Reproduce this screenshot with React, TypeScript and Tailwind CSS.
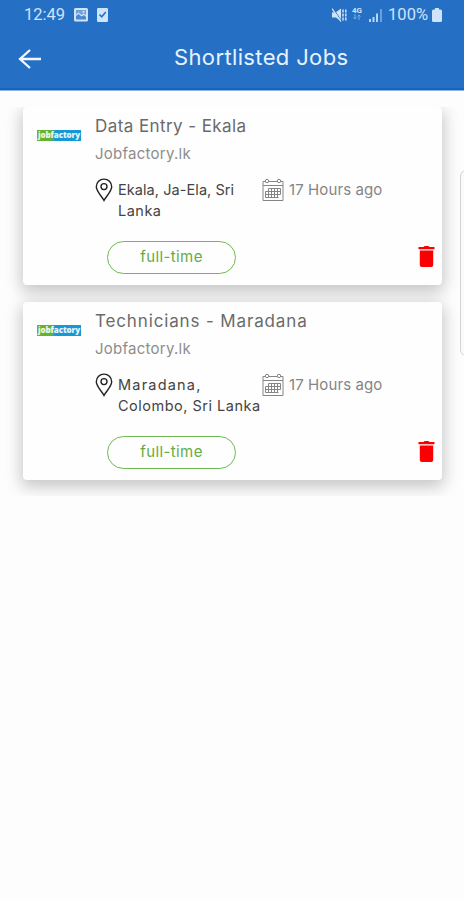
import React from 'react';

interface LocationLine {
  text: string;
  className: string;
}

interface Job {
  id: number;
  title: string;
  titleClass: string;
  company: string;
  location: LocationLine[];
  posted: string;
  type: string;
}

const jobs: Job[] = [
  {
    id: 1,
    title: 'Data Entry - Ekala',
    titleClass: 'tracking-[0.42px]',
    company: 'Jobfactory.lk',
    location: [
      { text: 'Ekala, Ja-Ela, Sri', className: 'tracking-[0.07px]' },
      { text: 'Lanka', className: 'tracking-[0.5px]' },
    ],
    posted: '17 Hours ago',
    type: 'full-time',
  },
  {
    id: 2,
    title: 'Technicians - Maradana',
    titleClass: 'tracking-[0.86px]',
    company: 'Jobfactory.lk',
    location: [
      { text: 'Maradana,', className: 'tracking-[1.2px]' },
      { text: 'Colombo, Sri Lanka', className: 'tracking-[0.5px]' },
    ],
    posted: '17 Hours ago',
    type: 'full-time',
  },
];

const PinIcon = () => (
  <svg width="18" height="24" viewBox="0 0 18 24" fill="none" stroke="#222" strokeWidth="1.4">
    <path d="M9 22.400C7.200 18.600 1.300 13.600 1.300 8.800a7.700 7.700 0 0 1 15.400 0C16.700 13.600 10.800 18.600 9 22.400Z" />
    <circle cx="9" cy="8.600" r="3" />
  </svg>
);

const CalendarIcon = () => (
  <svg width="22" height="24" viewBox="0 0 22 24" fill="none" stroke="#858585" strokeWidth="1">
    <path d="M3.500 3.500H1v19h20v-19h-2.500M6.500 3.500h9M1 7.500h20" />
    <circle cx="5" cy="3" r="1.700" />
    <circle cx="17" cy="3" r="1.700" />
    <path d="M6.500 10.500h12M3.500 13.500h15M3.500 16.500h15M3.500 19.500h13M3.500 13.500v6M6.500 10.500v9M9.500 10.500v9M12.500 10.500v9M15.500 10.500v9M18.500 10.500v6" />
  </svg>
);

const TrashIcon = () => (
  <svg width="17" height="22" viewBox="0 0 17 22" fill="#fb0000">
    <path d="M5.500 1 6.500 0h4l1 1H16.500v2.300H.5V1Z" />
    <path d="M1.800 4.500h13.400V19a2 2 0 0 1-2 2h-9.400a2 2 0 0 1-2-2Z" />
  </svg>
);

const StatusBar = () => (
  <div className="flex h-[30px] items-center pl-6 pr-[22px] text-[#cfe3fa]">
    <span className="w-[50px] whitespace-nowrap font-[Roboto] text-[16.500px]">12:49</span>
    <svg className="-mt-px" width="14" height="14" viewBox="0 0 14 14">
      <rect width="14" height="13.500" rx="1.500" fill="currentColor" />
      <path d="M2 11.500V8l2.500-2 3 2.500 2.500-1.500 2 2v2.500Z" fill="#4b88cf" />
      <path d="M2 2h10v5L9.500 5.500 7.500 7 4.500 4.500 2 6.500Z" fill="#6fa2dd" />
      <circle cx="9.500" cy="3.800" r="1.100" fill="currentColor" />
    </svg>
    <svg className="-mt-px ml-[9px]" width="11" height="14" viewBox="0 0 11 14">
      <rect width="11" height="14" rx="1.200" fill="currentColor" />
      <path d="m2.500 6.500 2.200 2.300L8.800 4" fill="none" stroke="#2570c4" strokeWidth="1.500" />
    </svg>
    <svg className="-mt-px ml-auto" width="15" height="14" viewBox="0 0 15 14">
      <path d="M0 4.500h3.500L9 .5v13l-5-4H0Z" fill="currentColor" />
      <path d="m1 .5 9 13" stroke="#2570c4" strokeWidth="1" />
      <path d="m0 .5 9 13" stroke="currentColor" strokeWidth="1.300" />
      <path d="M11 1.500v11M13.800 1.500v11" stroke="currentColor" strokeWidth="1.500" strokeDasharray="3 1" />
    </svg>
    <div className="-mt-[3px] ml-[5px] flex w-[10px] flex-col items-center">
      <span className="font-[Roboto] text-[8px] font-bold leading-[7px]">4G</span>
      <svg width="8" height="6" viewBox="0 0 8 6" fill="none" stroke="#7caee6">
        <path d="M2 0v5M.5 3.500 2 5l1.500-1.500M6 6V1M4.500 2.500 6 1l1.500 1.500" />
      </svg>
    </div>
    <svg className="ml-[7px]" width="13" height="13" viewBox="0 0 13 13">
      <path d="M0 10h2v3H0ZM3.500 8h2v5h-2ZM7 4.500h2V13H7Z" fill="#b7d4f5" />
      <path d="M11 0h2v13h-2Z" fill="#6d9fda" />
    </svg>
    <span className="ml-[6px] w-[42px] whitespace-nowrap font-[Roboto] text-[16.500px] tracking-[0.1px]">100%</span>
    <svg className="-mt-px ml-[2px]" width="10" height="14" viewBox="0 0 10 14" fill="currentColor">
      <path d="M3 0h4v1.500h1.500Q10 1.500 10 3v9.500q0 1.500-1.500 1.500h-7Q0 14 0 12.500V3q0-1.500 1.500-1.500H3Z" />
    </svg>
  </div>
);

const Logo = () => (
  <div className="mt-[23px] flex h-[11px] w-[44px] items-center justify-center bg-linear-to-r from-[#62b32f] from-30% to-[#1499d6] to-42% font-['Open_Sans'] text-[8px] font-extrabold leading-none tracking-[-0.1px] text-white/90">
    <span className="-mt-px">jobfactory</span>
  </div>
);

const JobCard: React.FC<{ job: Job }> = ({ job }) => (
  <div className="flex h-[178px] rounded-[4px] bg-[#fefefe] pl-[14px] pr-[7px] shadow-[0_5px_16px_2px_rgba(0,0,0,0.22)]">
    <Logo />
    <div className="ml-[14px] flex flex-1 flex-col">
      <h2 className={`mt-[7px] whitespace-nowrap text-[17px] leading-6 text-[#6a6a6a] ${job.titleClass}`}>{job.title}</h2>
      <p className="mt-[5px] text-[15px] leading-[22px] tracking-[0.25px] text-[#8d8d8d]">{job.company}</p>
      <div className="mt-[14px] flex h-[42px]">
        <div className="flex w-[167px] shrink-0">
          <div className="mt-[-1px] w-[23px] shrink-0">
            <PinIcon />
          </div>
          <p className="whitespace-nowrap text-[14.500px] leading-[21px] text-[#444]">
            {job.location.map(line => (
              <span key={line.text} className={`block ${line.className}`}>{line.text}</span>
            ))}
          </p>
        </div>
        <div className="flex">
          <div className="-mt-px w-[27px]">
            <CalendarIcon />
          </div>
          <span className="whitespace-nowrap text-[15px] leading-[21px] tracking-[0.1px] text-[#858585]">{job.posted}</span>
        </div>
      </div>
      <div className="mt-[20px] flex items-start justify-between">
        <span className="ml-[12px] flex h-[33px] w-[129px] items-center justify-center rounded-full border-[1.500px] border-[#70b852] pb-px text-[15px] tracking-[0.4px] text-[#62ad42]">
          {job.type}
        </span>
        <button type="button" aria-label="Remove job" className="mt-[5px]">
          <TrashIcon />
        </button>
      </div>
    </div>
  </div>
);

const App: React.FC = () => {
  return (
    <div className="relative flex h-[900px] w-[464px] flex-col overflow-hidden bg-[#fdfdfd] font-['Inter',sans-serif]">
      <header className="h-[91px] shrink-0 border-b border-[#8ab2e2] bg-[#2570c4] text-white">
        <StatusBar />
        <div className="flex h-[60px] items-center border-b-2 border-[#1765bc]">
          <svg className="ml-[18px]" width="24" height="20" viewBox="0 0 24 20" fill="none" stroke="#f2f8ff" strokeWidth="2.300">
            <path d="M23 10H2M12 1 2 10l10 9" />
          </svg>
          <h1 className="-mt-1 ml-[132px] whitespace-nowrap text-[22px] leading-8 tracking-[0.36px] text-[#e6f2ff]">Shortlisted Jobs</h1>
        </div>
      </header>

      {/* list, clips the card shadows at its edges */}
      <main className="mt-4 flex h-[389px] shrink-0 flex-col gap-[17px] overflow-hidden pl-[23px] pr-[22px]">
        {jobs.map(job => (
          <JobCard key={job.id} job={job} />
        ))}
      </main>

      {/* edge panel handle */}
      <div className="absolute -right-[8px] top-[170px] h-[186px] w-[12px] rounded-[6px] border border-[#d5d5d5] bg-[#fafafa]" />
    </div>
  );
};

export default App;
